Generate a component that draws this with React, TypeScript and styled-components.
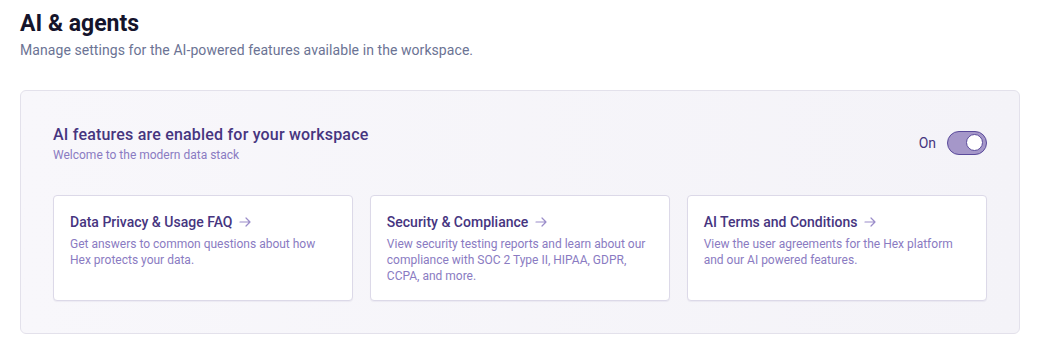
import React from 'react';
import styled, { createGlobalStyle } from 'styled-components';

const GlobalStyle = createGlobalStyle`
  * { box-sizing: border-box; }
  body {
    margin: 0;
    background: #ffffff;
    font-family: Roboto, 'Noto Sans', sans-serif;
  }
`;

const Page = styled.div`
  padding: 10px 22px 0 20px;
`;

const Title = styled.h1`
  margin: 0;
  font-size: 23px;
  line-height: 28px;
  font-weight: 700;
  color: #14142b;
`;

const Subtitle = styled.p`
  margin: 2px 0 0;
  font-size: 14px;
  line-height: 20px;
  letter-spacing: 0.07px;
  color: #6b7394;
`;

const Panel = styled.section`
  margin-top: 30px;
  padding: 32px;
  border: 1px solid #e3e1eb;
  border-radius: 6px;
  background: linear-gradient(90deg, #f8f7fb 0%, #f4f3f8 100%);
`;

const PanelHeader = styled.div`
  display: flex;
  align-items: center;
  justify-content: space-between;
`;

const HeaderText = styled.div`
  display: flex;
  flex-direction: column;
`;

const Heading = styled.h2`
  margin: 0;
  font-size: 16px;
  line-height: 24px;
  font-weight: 500;
  letter-spacing: 0.2px;
  color: #46357f;
`;

const Caption = styled.span`
  font-size: 12px;
  line-height: 16px;
  color: #8a7bc2;
`;

const ToggleWrap = styled.label`
  display: flex;
  align-items: center;
  gap: 11px;
  font-size: 14px;
  color: #46357f;
`;

const Track = styled.span<{ on: boolean }>`
  position: relative;
  display: inline-block;
  width: 40px;
  height: 24px;
  border-radius: 12px;
  border: 1.5px solid #5b4b9b;
  background: ${(p) => (p.on ? '#a597c9' : '#e3e1eb')};
`;

const Knob = styled.span<{ on: boolean }>`
  position: absolute;
  top: 2px;
  left: ${(p) => (p.on ? '18px' : '2px')};
  width: 17px;
  height: 17px;
  border-radius: 50%;
  background: #ffffff;
  border: 1.5px solid #5b4b9b;
`;

const Cards = styled.div`
  margin-top: 32px;
  display: grid;
  grid-template-columns: repeat(3, 1fr);
  gap: 16.5px;
`;

const Card = styled.a`
  display: block;
  padding: 16px;
  background: #ffffff;
  border: 1px solid #dcd9e8;
  border-radius: 4px;
  box-shadow: 0 1px 1px rgba(60, 50, 120, 0.06);
  text-decoration: none;
`;

const CardTitle = styled.div`
  display: flex;
  align-items: center;
  gap: 7px;
  font-size: 14px;
  line-height: 20px;
  font-weight: 500;
  color: #46357f;
`;

const ArrowIcon = styled.svg`
  flex: none;
  width: 12px;
  height: 12px;
  stroke: #9a8cc9;
`;

const CardText = styled.p`
  margin: 4px 0 0;
  font-size: 12px;
  line-height: 16px;
  color: #8a7bc2;
`;

const links = [
  {
    title: 'Data Privacy & Usage FAQ',
    text: 'Get answers to common questions about how Hex protects your data.',
  },
  {
    title: 'Security & Compliance',
    text: 'View security testing reports and learn about our compliance with SOC 2 Type II, HIPAA, GDPR, CCPA, and more.',
  },
  {
    title: 'AI Terms and Conditions',
    text: 'View the user agreements for the Hex platform and our AI powered features.',
  },
];

export default function App() {
  const on = true;
  return (
    <>
      <GlobalStyle />
      <Page>
        <Title>AI &amp; agents</Title>
        <Subtitle>Manage settings for the AI-powered features available in the workspace.</Subtitle>
        <Panel>
          <PanelHeader>
            <HeaderText>
              <Heading>AI features are enabled for your workspace</Heading>
              <Caption>Welcome to the modern data stack</Caption>
            </HeaderText>
            <ToggleWrap>
              On
              <Track on={on}>
                <Knob on={on} />
              </Track>
            </ToggleWrap>
          </PanelHeader>
          <Cards>
            {links.map((l) => (
              <Card key={l.title} href="#">
                <CardTitle>
                  {l.title}
                  <ArrowIcon viewBox="0 0 12 12" fill="none" strokeWidth="1.2" strokeLinecap="round" strokeLinejoin="round">
                    <path d="M1 6h10M7 2l4 4-4 4" />
                  </ArrowIcon>
                </CardTitle>
                <CardText>{l.text}</CardText>
              </Card>
            ))}
          </Cards>
        </Panel>
      </Page>
    </>
  );
}
